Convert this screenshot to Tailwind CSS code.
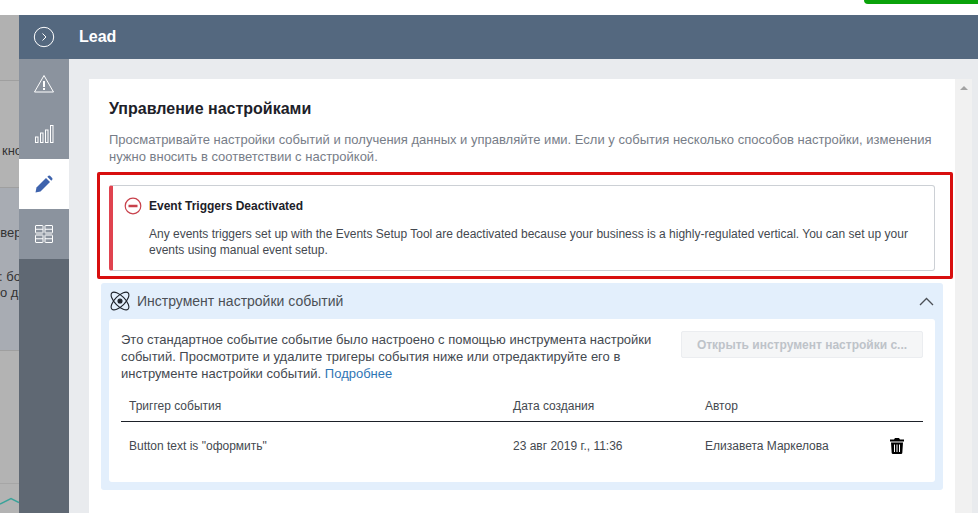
<!DOCTYPE html>
<html lang="en">
<head>
    <meta charset="UTF-8" />
    <title>Lead</title>
    <script src="https://cdn.jsdelivr.net/npm/@tailwindcss/browser@4"></script>
</head>
<body class="w-[978px] h-[513px] overflow-hidden bg-white font-['Liberation_Sans',Arial,sans-serif] relative">
    <!-- green button peeking in from the page behind -->
    <div class="h-[15px] flex justify-end items-start">
        <div class="w-[114px] h-[4px] bg-[#0aa20a] rounded-bl-sm"></div>
    </div>

    <div class="flex h-[498px]">
        <!-- page behind the panel -->
        <div class="w-[19px] shrink-0 flex flex-col text-[13px] leading-[16px] text-[#333] overflow-hidden whitespace-nowrap">
            <div class="h-[66px] shrink-0 bg-[#b1b1b1] border-b border-[#9f9f9f]"></div>
            <div class="h-[107px] shrink-0 bg-[#b3b3b3] border-b border-[#9f9f9f] pt-[62px] pl-[2px]">кно</div>
            <div class="h-[163px] shrink-0 bg-[#a8acb3] border-b border-[#9f9f9f] pt-[37px]">
                <div class="ml-[-7px]">овер</div>
                <div class="mt-[28px] ml-[-1px]">: бо</div>
                <div>о де</div>
            </div>
            <div class="h-[133px] shrink-0 bg-[#b3b3b3] border-b border-[#a6a6a6]"></div>
            <div class="flex-1 bg-[#b3b3b3] relative">
                <svg class="absolute left-0 top-[11px]" width="19" height="12" viewBox="0 0 19 12" fill="none"><path d="M0 9 L11 3.500 L19 7.500" stroke="#3aa39a" stroke-width="1.500"/></svg>
            </div>
        </div>

        <div class="flex-1 flex flex-col min-w-0">
            <!-- header -->
            <div class="h-[44px] bg-[#54687f] flex items-center shrink-0">
                <div class="w-[50px] flex justify-center">
                    <svg width="22" height="22" viewBox="0 0 22 22" fill="none" stroke="#fff"><circle cx="11" cy="11" r="9.700" stroke-width="1"/><path d="M9.500 7.500 L13 11 L9.500 14.500" stroke-width="1"/></svg>
                </div>
                <span class="ml-[10px] text-white font-bold text-[16px]">Lead</span>
            </div>

            <div class="flex-1 flex min-h-0">
                <!-- side tabs -->
                <div class="w-[50px] shrink-0 flex flex-col bg-[#5f6873]">
                    <div class="h-[50px] bg-[#8b939e] flex items-center justify-center">
                        <svg width="22" height="20" viewBox="0 0 22 20" fill="none" stroke="#fff"><path d="M11 1.500 L20.500 18 H1.500 Z" stroke-width="1"/><path d="M11 7 V13" stroke-width="2"/><path d="M11 14 V16" stroke-width="2"/></svg>
                    </div>
                    <div class="h-[50px] bg-[#8b939e] flex items-center justify-center">
                        <svg width="20" height="20" viewBox="0 0 20 20" fill="none" stroke="#fff" stroke-width="1"><rect x="1.500" y="13" width="2.500" height="5.500"/><rect x="6.500" y="9" width="2.500" height="9.500"/><rect x="11.500" y="6" width="2.500" height="12.500"/><rect x="16.500" y="1.500" width="2.500" height="17"/></svg>
                    </div>
                    <div class="h-[50px] bg-white flex items-center justify-center">
                        <svg width="18" height="18" viewBox="0 0 18 18" fill="#3e63ad"><path d="M0.500 17.500 L1.500 12.500 L11 3 L15 7 L5.500 16.500 Z"/><path d="M12.300 1.700 L13.500 0.700 Q14.300 0.200 15 0.800 L17.200 3 Q17.800 3.700 17.300 4.500 L16.300 5.700 Z"/></svg>
                    </div>
                    <div class="h-[50px] bg-[#8b939e] flex items-center justify-center">
                        <svg width="20" height="20" viewBox="0 0 20 20" fill="none" stroke="#fff" stroke-width="1"><rect x="1.500" y="1.500" width="7.500" height="7.500" rx="0.500"/><rect x="11" y="1.500" width="7.500" height="7.500" rx="0.500"/><path d="M1.500 5.250 H9 M11 5.250 H18.500"/><rect x="1.500" y="11" width="7.500" height="7.500" rx="0.500"/><rect x="11" y="11" width="7.500" height="7.500" rx="0.500"/><path d="M1.500 14.750 H9 M11 14.750 H18.500"/></svg>
                    </div>
                </div>

                <!-- content -->
                <div class="flex-1 bg-[#e9ebee] pl-[20px] pt-[20px] flex min-w-0">
                    <div class="w-[866px] shrink-0 bg-white px-[12px] pt-[20px] relative">
                        <h1 class="ml-[8px] text-[16px] leading-[20px] font-bold text-[#1d2129]">Управление настройками</h1>
                        <p class="ml-[8px] mt-[12px] text-[13px] leading-[17px] text-[#777d88] w-[840px]">Просматривайте настройки событий и получения данных и управляйте ими. Если у события несколько способов настройки, изменения нужно вносить в соответствии с настройкой.</p>

                        <!-- alert -->
                        <div class="mt-[20px] ml-[8px] w-[826px] h-[86px] bg-white border border-[#ccd0d5] rounded-[3px] border-l-[4px] border-l-[#e0434f] pl-[36px] pr-[20px] relative">
                            <svg class="absolute left-[11px] top-[11px]" width="18" height="18" viewBox="0 0 18 18" fill="none"><circle cx="9" cy="9" r="7.800" stroke="#c8414b" stroke-width="1.200"/><path d="M4.500 9 H13.500" stroke="#c8414b" stroke-width="2.500"/></svg>
                            <div class="pt-[12px] text-[12px] leading-[16px] font-bold text-[#1d2129]">Event Triggers Deactivated</div>
                            <p class="mt-[12px] text-[12px] leading-[16px] text-[#444950]">Any events triggers set up with the Events Setup Tool are deactivated because your business is a highly-regulated vertical. You can set up your events using manual event setup.</p>
                        </div>

                        <!-- tool block -->
                        <div class="mt-[12px] w-[842px] h-[207px] bg-[#e3effc] rounded-[3px] px-[8px] pb-[8px] flex flex-col">
                            <div class="h-[36px] shrink-0 flex items-center text-[14px] text-[#4b4f56]">
                                <svg class="ml-[1px]" width="20" height="20" viewBox="0 0 20 20" fill="none" stroke="#1d2129" stroke-width="1.100"><ellipse cx="10" cy="10" rx="11.500" ry="5" transform="rotate(45 10 10)"/><ellipse cx="10" cy="10" rx="11.500" ry="5" transform="rotate(-45 10 10)"/><circle cx="10" cy="10" r="2" fill="#1d2129"/></svg>
                                <span class="ml-[7px]">Инструмент настройки событий</span>
                                <svg class="ml-auto mr-[1px]" width="15" height="9" viewBox="0 0 15 9" fill="none" stroke="#4b4f56" stroke-width="1.300"><path d="M1 8 L7.500 1.500 L14 8"/></svg>
                            </div>
                            <div class="flex-1 bg-white rounded-[3px] px-[12px] relative">
                                <div class="flex justify-between pt-[12px]">
                                    <p class="w-[540px] text-[13px] leading-[17px] text-[#444950]">Это стандартное событие событие было настроено с помощью инструмента настройки событий. Просмотрите и удалите тригеры события ниже или отредактируйте его в инструменте настройки событий. <a class="text-[#2f76b5]">Подробнее</a></p>
                                    <div class="w-[242px] h-[27px] bg-[#f5f6f7] border border-[#ebedf0] rounded-[2px] flex items-center justify-center text-[12px] font-bold text-[#bec3c9]">Открыть инструмент настройки с...</div>
                                </div>
                                <div class="mt-[8px] h-[32px] border-b border-[#1d2129] flex items-center text-[12px] text-[#444950]">
                                    <span class="ml-[8px] w-[384px]">Триггер события</span>
                                    <span class="w-[192px]">Дата создания</span>
                                    <span>Автор</span>
                                </div>
                                <div class="h-[47px] flex items-center text-[12px] text-[#444950]">
                                    <span class="ml-[8px] w-[384px]">Button text is "оформить"</span>
                                    <span class="w-[192px]">23 авг 2019 г., 11:36</span>
                                    <span class="w-[185px]">Елизавета Маркелова</span>
                                    <svg width="14" height="16" viewBox="0 0 14 16" fill="#000"><path d="M5 0 H9 L10 1.500 H14 V3.500 H0 V1.500 H4 Z"/><path d="M1 4.500 H13 L12.300 15 Q12.200 16 11 16 H3 Q1.800 16 1.700 15 Z M4 6.500 V14 H5 V6.500 Z M6.500 6.500 V14 H7.500 V6.500 Z M9 6.500 V14 H10 V6.500 Z" fill-rule="evenodd"/></svg>
                                </div>
                            </div>
                        </div>

                        <!-- annotation frame over the alert -->
                        <div class="absolute left-[8px] top-[93px] w-[856px] h-[107px] border-[3px] border-[#d80f0f] rounded-[2px]"></div>
                    </div>

                    <!-- scrollbar -->
                    <div class="w-[17px] bg-[#f1f1f1] flex justify-center pt-[7px]">
                        <div class="w-0 h-0 border-x-[4px] border-x-transparent border-b-[4px] border-b-[#a3a3a3]"></div>
                    </div>
                </div>
            </div>
        </div>
    </div>
</body>
</html>
